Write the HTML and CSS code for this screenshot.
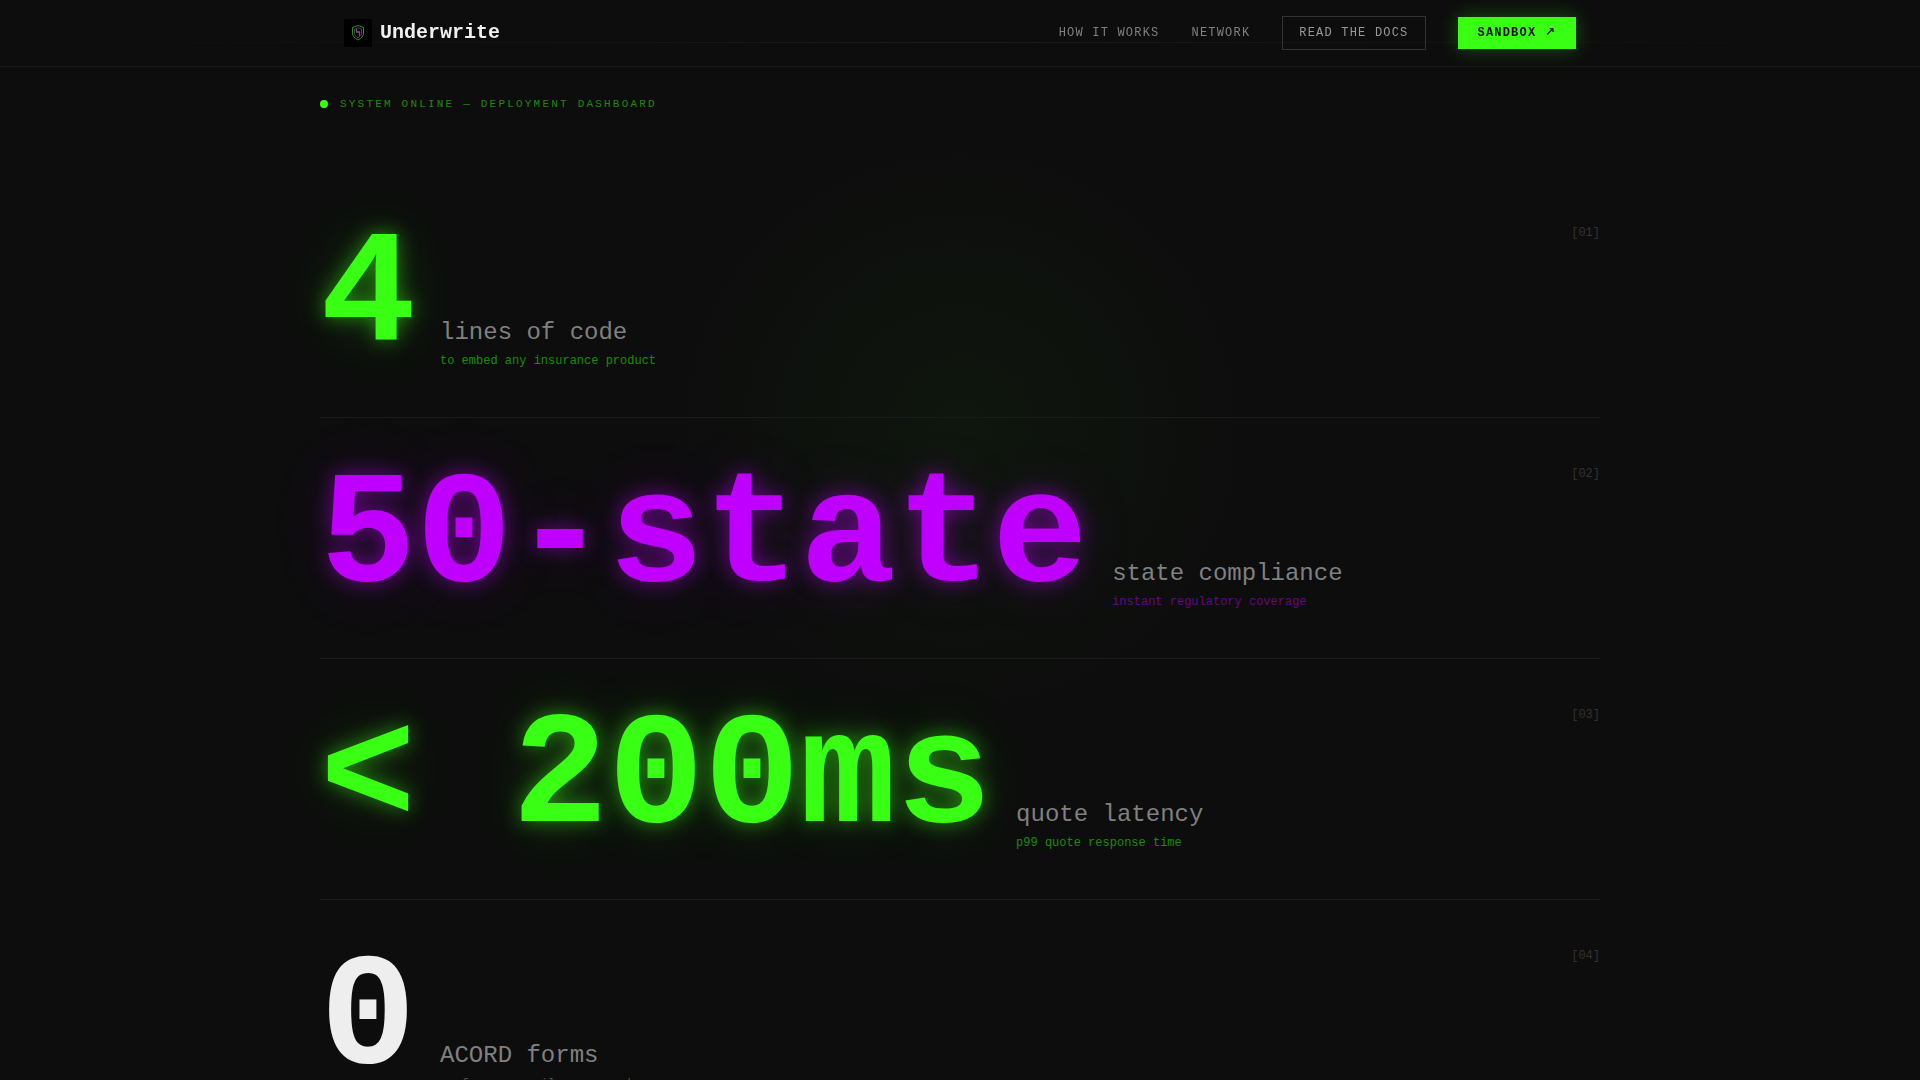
FILE: index.html
```html
<!DOCTYPE html>
<html lang="en">
<head>
    <meta charset="UTF-8">
    <meta name="viewport" content="width=device-width, initial-scale=1.0">
    <title>Underwrite</title>
    <link rel="stylesheet" href="styles.css">
</head>
<body>
    <nav class="nav">
        <div class="nav-inner">
            <a href="#" class="logo">
                <svg class="logo-mark" viewBox="0 0 28 28" fill="none" aria-hidden="true">
                    <rect width="28" height="28" fill="#000"/>
                    <path d="M14 6.500 8.500 8.500v5.500c0 3 2 5.200 5.500 7 3.500-1.800 5.500-4 5.500-7V8.500z" stroke="#3a8a30" stroke-width="1"/>
                    <path d="M14 8.800 10.500 10v4c0 2 1.300 3.500 3.500 4.800 2.200-1.300 3.500-2.800 3.500-4.800v-4z" stroke="#4a6a45" stroke-width="0.800"/>
                    <path d="M12.500 10v3h3v4" stroke="#a030b5" stroke-width="1.300"/>
                </svg>
                <span class="logo-text">Underwrite</span>
            </a>
            <div class="nav-links">
                <a href="#how" class="nav-link">How it works</a>
                <a href="#network" class="nav-link">Network</a>
                <a href="#docs" class="btn-outline">Read the docs</a>
                <a href="#sandbox" class="btn-primary">Sandbox <span class="arrow">↗</span></a>
            </div>
        </div>
    </nav>

    <main class="hero">
        <div class="status">
            <span class="status-dot"></span>
            <span class="status-text">System online — Deployment dashboard</span>
        </div>

        <section class="stat">
            <div class="stat-value green">4</div>
            <div class="stat-info">
                <p class="stat-label">lines of code</p>
                <p class="stat-sub green-dim">to embed any insurance product</p>
            </div>
            <span class="stat-index">[01]</span>
        </section>

        <section class="stat">
            <div class="stat-value purple">50-state</div>
            <div class="stat-info">
                <p class="stat-label">state compliance</p>
                <p class="stat-sub purple-dim">instant regulatory coverage</p>
            </div>
            <span class="stat-index">[02]</span>
        </section>

        <section class="stat">
            <div class="stat-value green">&lt; 200ms</div>
            <div class="stat-info">
                <p class="stat-label">quote latency</p>
                <p class="stat-sub green-dim">p99 quote response time</p>
            </div>
            <span class="stat-index">[03]</span>
        </section>

        <section class="stat">
            <div class="stat-value white">0</div>
            <div class="stat-info">
                <p class="stat-label">ACORD forms</p>
                <p class="stat-sub white-dim">no fax, no email, no rework</p>
            </div>
            <span class="stat-index">[04]</span>
        </section>
    </main>
</body>
</html>
```

FILE: styles.css
```css
* {
    box-sizing: border-box;
    margin: 0;
    padding: 0;
}

html {
    scrollbar-width: none;
}

body {
    background-color: #0d0d0d;
    color: #f0f0f0;
    font-family: 'Liberation Mono', monospace;
}

a {
    color: inherit;
    text-decoration: none;
}

/* Navigation */
.nav {
    position: fixed;
    top: 0;
    left: 0;
    right: 0;
    z-index: 10;
    border-bottom: 1px solid #181818;
}

/* scanline */
.nav::after {
    content: '';
    position: absolute;
    left: 0;
    right: 0;
    top: 42px;
    height: 1px;
    background: linear-gradient(90deg, transparent, #191b16, transparent);
    z-index: -1;
}

.nav-inner {
    max-width: 1280px;
    margin: 0 auto;
    padding: 16px 24px;
    display: flex;
    align-items: center;
    justify-content: space-between;
}

.logo {
    display: flex;
    align-items: center;
    gap: 8px;
}

.logo-mark {
    width: 28px;
    height: 28px;
}

.logo-text {
    font-size: 20px;
    line-height: 28px;
    font-weight: 700;
}

.nav-links {
    display: flex;
    align-items: center;
    gap: 32px;
    font-size: 12px;
    line-height: 16px;
    letter-spacing: 0.1em;
    text-transform: uppercase;
}

.nav-link {
    color: #808080;
}

.btn-outline {
    padding: 8px 16px;
    border: 1px solid #333;
    color: #999;
}

.btn-primary {
    padding: 8px 20px;
    background: #39ff14;
    color: #0d0d0d;
    font-weight: 700;
    box-shadow: 0 0 20px rgba(57, 255, 20, 0.3);
}

.arrow {
    font-family: 'DejaVu Sans', sans-serif;
    line-height: 1;
}

/* Hero */
.hero {
    position: relative;
    max-width: 1280px;
    margin: 0 auto;
    padding-top: 96px;
}

.hero::before {
    content: '';
    position: absolute;
    top: 130px;
    left: 50%;
    width: 600px;
    height: 600px;
    margin-left: -300px;
    background: radial-gradient(closest-side, rgba(57, 255, 20, 0.04), transparent);
    z-index: -1;
}

.status {
    display: flex;
    align-items: center;
    gap: 12px;
    margin-bottom: 65px;
}

.status-dot {
    width: 8px;
    height: 8px;
    border-radius: 50%;
    background: #39ff14;
}

.status-text {
    font-size: 11px;
    line-height: 16px;
    letter-spacing: 0.2em;
    text-transform: uppercase;
    color: rgba(57, 255, 20, 0.5);
}

.stat {
    display: flex;
    align-items: flex-end;
    gap: 24px;
    padding: 48px 0;
    border-bottom: 1px solid #1b1b1b;
}

.stat-value {
    font-size: 160px;
    line-height: 144px;
    font-weight: 700;
    white-space: nowrap;
}

.stat-label {
    font-size: 24px;
    line-height: 32px;
    color: #808080;
    margin-bottom: 4px;
}

.stat-sub {
    font-size: 12px;
    line-height: 16px;
}

.stat-index {
    align-self: flex-start;
    margin-left: auto;
    font-size: 12px;
    line-height: 16px;
    color: #333;
}

.green {
    color: #39ff14;
    text-shadow: 0 0 20px rgba(57, 255, 20, 0.5), 0 0 60px rgba(57, 255, 20, 0.2);
}

.purple {
    color: #bf00ff;
    text-shadow: 0 0 20px rgba(191, 0, 255, 0.5), 0 0 60px rgba(191, 0, 255, 0.2);
}

.white {
    color: #eee;
}

.green-dim {
    color: rgba(57, 255, 20, 0.5);
}

.purple-dim {
    color: rgba(191, 0, 255, 0.5);
}

.white-dim {
    color: #555;
}
```
